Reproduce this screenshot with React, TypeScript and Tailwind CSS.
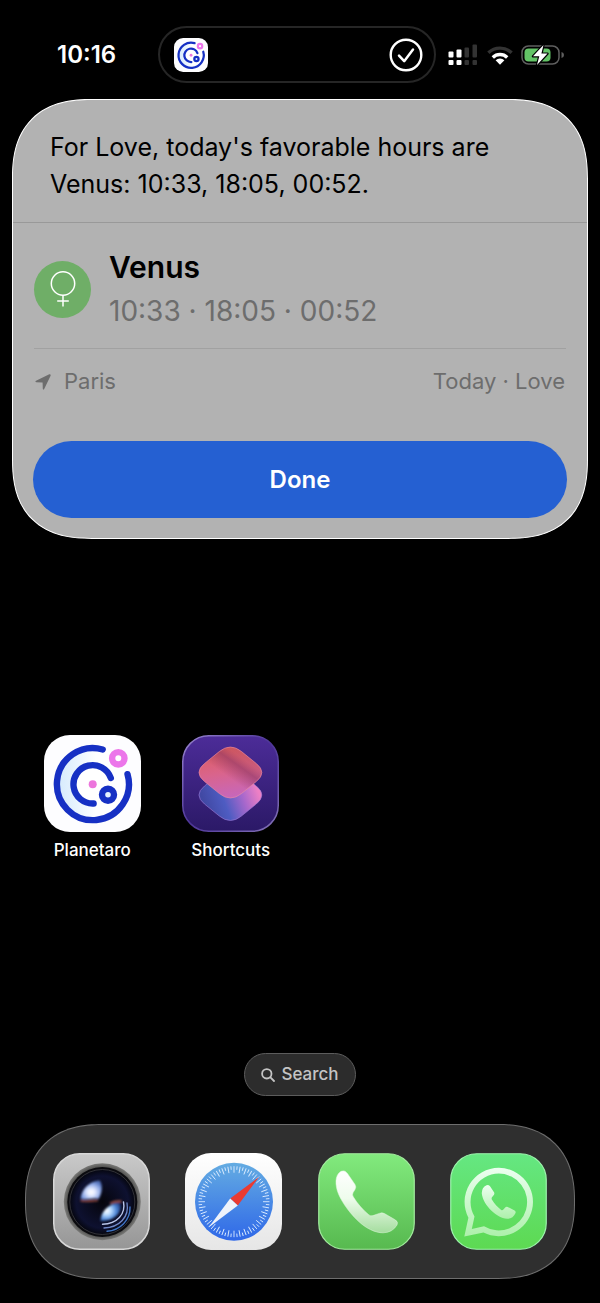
import { useState } from "react";
import type { ReactNode } from "react";
import clsx from "clsx";

const planetHours = {
  planet: "Venus",
  topic: "Love",
  city: "Paris",
  hours: ["10:33", "18:05", "00:52"],
};

const iconClass = "block size-[97px]";

function PlanetaroIcon({ className }: { className?: string }) {
  return (
    <svg viewBox="0 0 97 97" className={className} fill="none" aria-hidden="true">
      <defs>
        <linearGradient id="planetaro-glow" x1="0" y1="0" x2="1" y2="0">
          <stop offset="0" stopColor="#bfe0fb" />
          <stop offset="0.55" stopColor="#ffffff" />
        </linearGradient>
      </defs>
      <rect width="97" height="97" rx="26" fill="#fdfdff" />
      <circle cx="48.7" cy="50" r="38" fill="url(#planetaro-glow)" opacity="0.7" />
      <circle cx="48.7" cy="49.3" r="17" fill="#fff" />
      <g strokeLinecap="round" strokeWidth="6.4" stroke="#1630c4">
        <path d="M58.7 14.5A36 36 0 1 0 83.5 39.2" />
        <path d="M66.8 43A19.2 19.2 0 1 0 49.6 68.5" />
        <circle cx="64" cy="59.7" r="6" fill="#e6f2ff" />
      </g>
      <circle cx="74.3" cy="23.3" r="6.2" stroke="#ec76ea" strokeWidth="6.4" fill="#fff" />
      <circle cx="48.7" cy="49.2" r="4" fill="#ec76dc" />
    </svg>
  );
}

function ShortcutsIcon() {
  const diamond =
    "M25.9 -9Q37 0 25.9 9L11.1 21Q0 30 -11.1 21L-25.9 9Q-37 0 -25.9 -9L-11.1 -21Q0 -30 11.1 -21Z";
  return (
    <svg viewBox="0 0 97 97" className={iconClass} fill="none" aria-hidden="true">
      <defs>
        <linearGradient id="sc-bg" x1="0" y1="0" x2="0" y2="1">
          <stop offset="0" stopColor="#4c2c98" />
          <stop offset="1" stopColor="#2b1967" />
        </linearGradient>
        <linearGradient id="sc-edge" x1="0" y1="0" x2="1" y2="1">
          <stop offset="0" stopColor="#9a86cf" />
          <stop offset="0.5" stopColor="#4d3598" />
          <stop offset="1" stopColor="#8574b8" />
        </linearGradient>
        <linearGradient id="sc-top" x1="0.35" y1="0" x2="0.55" y2="1">
          <stop offset="0" stopColor="#de5e5e" />
          <stop offset="0.5" stopColor="#d9648c" />
          <stop offset="1" stopColor="#c667bd" />
        </linearGradient>
        <linearGradient id="sc-shade" x1="0.5" y1="0.62" x2="0.78" y2="0.3">
          <stop offset="0" stopColor="#8e3560" stopOpacity="0" />
          <stop offset="0.65" stopColor="#8e3560" stopOpacity="0.6" />
          <stop offset="1" stopColor="#b0485c" stopOpacity="0.35" />
        </linearGradient>
        <linearGradient id="sc-low" x1="0.1" y1="0.7" x2="0.95" y2="0.45">
          <stop offset="0" stopColor="#4149a4" />
          <stop offset="0.35" stopColor="#4e5cc2" />
          <stop offset="0.7" stopColor="#a868cc" />
          <stop offset="1" stopColor="#ee80c5" />
        </linearGradient>
      </defs>
      <rect x="0.75" y="0.75" width="95.5" height="95.5" rx="26" fill="url(#sc-bg)" stroke="url(#sc-edge)" strokeWidth="1.5" />
      <path d={diamond} transform="translate(48.4 60)" fill="url(#sc-low)" stroke="#a07ad8" strokeWidth="0.6" />
      <g transform="translate(48.4 37.5)">
        <path d={diamond} fill="url(#sc-top)" />
        <path d={diamond} fill="url(#sc-shade)" stroke="#ee8da0" strokeWidth="0.6" />
      </g>
    </svg>
  );
}

function CameraIcon() {
  return (
    <svg viewBox="0 0 97 97" className={iconClass} fill="none" aria-hidden="true">
      <defs>
        <linearGradient id="cam-bg" x1="0" y1="0" x2="0" y2="1">
          <stop offset="0" stopColor="#c9c9c9" />
          <stop offset="1" stopColor="#969696" />
        </linearGradient>
        <radialGradient id="cam-ring">
          <stop offset="0.88" stopColor="#4a4a48" />
          <stop offset="1" stopColor="#7c7c7a" />
        </radialGradient>
        <radialGradient id="cam-glass">
          <stop offset="0" stopColor="#05050c" />
          <stop offset="0.8" stopColor="#0e1130" />
          <stop offset="1" stopColor="#05060f" />
        </radialGradient>
        <radialGradient id="cam-flare" cx="0.5" cy="0.62" r="0.6">
          <stop offset="0" stopColor="#ffffff" />
          <stop offset="0.3" stopColor="#e3eaff" />
          <stop offset="0.7" stopColor="#8fa9e6" />
          <stop offset="1" stopColor="#5170b8" />
        </radialGradient>
        <radialGradient id="cam-low" cx="0.3" cy="0.45" r="0.75">
          <stop offset="0" stopColor="#ffffff" />
          <stop offset="0.3" stopColor="#b9dcff" />
          <stop offset="0.65" stopColor="#4d86d6" />
          <stop offset="1" stopColor="#1f3476" />
        </radialGradient>
        <filter id="cam-soft" x="-20%" y="-20%" width="140%" height="140%">
          <feGaussianBlur stdDeviation="1" />
        </filter>
        <filter id="cam-fine" x="-20%" y="-20%" width="140%" height="140%">
          <feGaussianBlur stdDeviation="0.5" />
        </filter>
      </defs>
      <rect x="0.75" y="0.75" width="95.5" height="95.5" rx="26" fill="url(#cam-bg)" stroke="#d8d8d8" strokeWidth="1.5" />
      <circle cx="49.3" cy="48.7" r="38.5" fill="url(#cam-ring)" />
      <circle cx="49.3" cy="49" r="35" fill="#0b0b0f" />
      <circle cx="49.3" cy="49" r="32.5" fill="url(#cam-glass)" stroke="#3c3c42" strokeWidth="0.8" />
      <g filter="url(#cam-soft)">
        <path d="M27.5 46C28 37 36 28 46.5 27.5C50 31 49.5 40 45.5 46C39 44.5 33 47.5 27.5 46Z" fill="url(#cam-flare)" />
        <path d="M27.5 47.5C33 49.5 40 47 45 47.5" stroke="#a8503f" strokeWidth="1.6" />
        <path d="M47.5 68C47.5 59 55 50.5 67 49.5C70 57 64 68 47.5 68Z" fill="url(#cam-low)" />
        <path d="M57 50.5Q63 47.5 68.5 48.5" stroke="#a8574b" strokeWidth="1.8" />
      </g>
      <g filter="url(#cam-fine)" strokeLinecap="round">
        <path d="M70.5 49C73 61 64 71 49.5 71.2" stroke="#b9c6ea" strokeWidth="1.4" />
        <path d="M74 50C76.5 64 66.5 74.5 51 75" stroke="#7189c8" strokeWidth="1.3" />
        <path d="M77 54C77.5 67 67 77.5 54 78.2" stroke="#3f74c4" strokeWidth="1.4" />
      </g>
    </svg>
  );
}

function SafariIcon() {
  const ticks = Array.from({ length: 72 }, (_, i) => i * 5);
  return (
    <svg viewBox="0 0 97 97" className={iconClass} aria-hidden="true">
      <defs>
        <linearGradient id="saf-bg" x1="0" y1="0" x2="0" y2="1">
          <stop offset="0" stopColor="#ffffff" />
          <stop offset="1" stopColor="#e6e6e6" />
        </linearGradient>
        <linearGradient id="saf-dial" x1="0" y1="0" x2="0" y2="1">
          <stop offset="0" stopColor="#64ace2" />
          <stop offset="1" stopColor="#2f68e8" />
        </linearGradient>
      </defs>
      <rect width="97" height="97" rx="26" fill="url(#saf-bg)" />
      <circle cx="49" cy="48.7" r="39" fill="url(#saf-dial)" />
      {ticks.map((deg, i) => (
        <line
          key={deg}
          x1="49"
          x2="49"
          y1="13.2"
          y2={i % 2 === 0 ? 19.7 : 16.7}
          stroke="#dcecff"
          strokeWidth="0.9"
          transform={`rotate(${deg} 49 48.7)`}
        />
      ))}
      <path d="M74.2 23.8L52.8 52.4L45.2 45.4Z" fill="#e93a32" />
      <path d="M23.6 74.4L45.2 45.4L52.8 52.4Z" fill="#eef3fb" />
    </svg>
  );
}

function PhoneIcon() {
  return (
    <svg viewBox="0 0 97 97" className={iconClass} aria-hidden="true">
      <defs>
        <linearGradient id="ph-bg" x1="0" y1="0" x2="0" y2="1">
          <stop offset="0" stopColor="#82ea7e" />
          <stop offset="1" stopColor="#57b94f" />
        </linearGradient>
        <linearGradient id="ph-set" x1="0" y1="0" x2="0" y2="1">
          <stop offset="0" stopColor="#ffffff" />
          <stop offset="0.45" stopColor="#eefcec" />
          <stop offset="1" stopColor="#a5dd9f" />
        </linearGradient>
      </defs>
      <rect x="0.75" y="0.75" width="95.5" height="95.5" rx="26" fill="url(#ph-bg)" stroke="#a2eb9e" strokeWidth="1.2" />
      <path
        d="M23 18.3Q27 16.8 29.5 20.5L37 31.5Q38.7 34 37 36.6L35 39.7Q34 41.8 35.3 43.8C39.5 51 45.5 57.4 51 62Q52.7 63.3 55 62.6L61.3 60.4Q64 59.3 66.4 60.5L77.5 67Q80.5 69 79 72Q74.5 79.6 65 79.8C57 79.8 48.5 75.4 41.5 69.2C33 61.6 24.5 50.5 20.5 41C17 32.5 16.5 22 23 18.3Z"
        fill="url(#ph-set)"
        stroke="#e1f9de"
        strokeWidth="0.5"
      />
    </svg>
  );
}

function WhatsAppIcon() {
  return (
    <svg viewBox="0 0 97 97" className={iconClass} aria-hidden="true">
      <defs>
        <linearGradient id="wa-bg" x1="0" y1="0" x2="0" y2="1">
          <stop offset="0" stopColor="#65e782" />
          <stop offset="1" stopColor="#5dd952" />
        </linearGradient>
        <linearGradient id="wa-fg" x1="0" y1="0" x2="0" y2="1">
          <stop offset="0" stopColor="#ecfff0" />
          <stop offset="1" stopColor="#adf0ab" />
        </linearGradient>
      </defs>
      <rect x="0.75" y="0.75" width="95.5" height="95.5" rx="26" fill="url(#wa-bg)" stroke="#9df3ad" strokeWidth="1.2" />
      <path
        fillRule="evenodd"
        d="M48.8 14.8A34.2 34.2 0 1 1 33.5 79.6L14.3 83.5L18.4 64.7A34.2 34.2 0 0 1 48.8 14.8ZM48.8 20.6A28.4 28.4 0 0 0 24.5 63.5L21.8 76L34 73.3A28.4 28.4 0 1 0 48.8 20.6Z"
        fill="url(#wa-fg)"
      />
      <path
        d="M36.5 32.3Q39 31.3 40.2 33.5L44 39.3Q44.8 40.7 43.8 42L42 44.3Q41.2 45.5 42 46.8C44.5 51 47.8 54.4 51.2 57Q52.4 57.6 53.4 56.6L55.2 54.4Q56.3 53.2 57.8 54L64.6 57.6Q66.2 58.6 65.4 60.3Q63 65.8 57 65.8C51.5 65.4 46 62 41.5 57.7C36 52.4 32.3 46 31.8 40.5Q31.6 34.7 36.5 32.3Z"
        fill="url(#wa-fg)"
      />
    </svg>
  );
}

function StatusIcons() {
  return (
    <div className="flex items-center gap-2" role="img" aria-label="Signal, Wi-Fi, charging">
      <svg width="31" height="22" viewBox="0 0 31 22" aria-hidden="true">
        <g fill="#fff">
          <rect x="0.5" y="7.5" width="5" height="6" rx="1" />
          <rect x="8.5" y="5.5" width="5" height="8" rx="1" />
          <rect x="0.5" y="16" width="5" height="5" rx="1" />
          <rect x="8.5" y="16" width="5" height="5" rx="1" />
        </g>
        <g fill="#333">
          <rect x="16.5" y="3.5" width="4.5" height="10" rx="1" />
          <rect x="24.5" y="0.5" width="4.5" height="13" rx="1" />
          <rect x="16.5" y="16" width="4.5" height="5" rx="1" />
          <rect x="24.5" y="16" width="4.5" height="5" rx="1" />
        </g>
      </svg>
      <svg width="26" height="22" viewBox="0 0 26 22" fill="none" strokeWidth="3.4" aria-hidden="true">
        <path d="M1.4 8.8A16.7 16.7 0 0 1 24.6 8.8" stroke="#333" />
        <path d="M5.8 13.4A10.4 10.4 0 0 1 20.2 13.4" stroke="#fff" />
        <path d="M8.6 16.3A6.3 6.3 0 0 1 17.4 16.3L13 20.8Z" fill="#fff" />
      </svg>
      <svg width="43" height="22" viewBox="0 0 43 22" fill="none" aria-hidden="true">
        <rect x="1" y="2" width="37" height="18" rx="6.5" stroke="#5f5f5f" strokeWidth="1.5" />
        <path d="M40.5 8Q43 8.6 43 11T40.5 14Z" fill="#5f5f5f" />
        <rect x="3.5" y="4.5" width="26" height="13" rx="4" fill="#63c466" />
        <path
          d="M22.5 1L12 12.3H18.3L16 21L26.5 9.6H20.4Z"
          fill="#fff"
          stroke="#000"
          strokeWidth="2.4"
          strokeLinejoin="round"
          paintOrder="stroke"
        />
      </svg>
    </div>
  );
}

function StatusBar() {
  return (
    <header className="flex items-center pt-[26px] pr-[36px] text-white">
      <time className="w-[158px] pl-[57px] text-2xl font-semibold">10:16</time>
      <div className="flex h-[57px] flex-1 items-center justify-between rounded-full border-2 border-[#262626] pr-[11px] pl-[14px]">
        <PlanetaroIcon className="size-[34px]" />
        <svg width="34" height="34" viewBox="0 0 34 34" fill="none" stroke="#fff" aria-hidden="true">
          <circle cx="17" cy="17" r="15.3" strokeWidth="2.4" />
          <path d="M10 17.6L15.2 23.2L24 11.5" strokeWidth="2.5" strokeLinecap="round" strokeLinejoin="round" />
        </svg>
      </div>
      <div className="pl-3">
        <StatusIcons />
      </div>
    </header>
  );
}

function SiriCard({ onDone }: { onDone: () => void }) {
  const { planet, topic, city, hours } = planetHours;
  return (
    <section className="mx-3 mt-4 rounded-[80px] border border-white bg-[#b2b2b2] text-black [corner-shape:superellipse(1.3)]">
      <p className="border-b border-[#999] pt-[29px] pr-[38px] pb-[19px] pl-[37px] text-[25px] leading-[37px]">
        For {topic}, today's favorable hours are {planet}: {hours.join(", ")}.
      </p>

      <div className="px-5 pt-[22px] pb-5">
        <div className="flex items-center gap-[18px] px-px pb-[15px]">
          <div className="flex size-[57px] items-center justify-center rounded-full bg-[#6fae67]">
            <svg width="26" height="36" viewBox="0 0 26 36" fill="none" stroke="#fff" strokeWidth="1.5" aria-hidden="true">
              <circle cx="13" cy="12.5" r="11.7" />
              <path d="M13 24.2V35.5M7.2 30H18.8" />
            </svg>
          </div>
          <div>
            <h2 className="text-[30px] leading-[44px] font-semibold">{planet}</h2>
            <p className="text-[28px] leading-[44px] text-[#6d6d6d]">{hours.join(" · ")}</p>
          </div>
        </div>

        <div className="mx-px flex items-center justify-between border-t border-[#a1a1a1] pt-4 pr-px text-[22px] leading-[33px] text-[#6d6d6d]">
          <span className="flex items-center gap-[13px] pl-px">
            <svg width="16" height="16" viewBox="0 0 16 16" fill="currentColor" aria-hidden="true">
              <path d="M14.3 0.3Q16 0 15.6 1.7L9.2 15Q8.2 16.3 7.8 14.7L7.6 8.6L1.2 8.2Q-0.5 7.7 1 6.8Z" />
            </svg>
            {city}
          </span>
          <span>Today · {topic}</span>
        </div>

        <button
          type="button"
          onClick={onDone}
          className="mt-[43px] h-[77px] w-full rounded-full bg-[#2560d2] text-2xl font-semibold text-white"
        >
          Done
        </button>
      </div>
    </section>
  );
}

function HomeApp({ name, children }: { name: string; children: ReactNode }) {
  return (
    <button type="button" className="flex flex-col items-center gap-1 text-[17px] leading-7 font-medium text-white">
      {children}
      {name}
    </button>
  );
}

const dockApps = [
  { name: "Camera", Icon: CameraIcon },
  { name: "Safari", Icon: SafariIcon },
  { name: "Phone", Icon: PhoneIcon },
  { name: "WhatsApp", Icon: WhatsAppIcon },
];

export default function App() {
  const [dismissed, setDismissed] = useState(false);

  return (
    <div className="flex min-h-screen flex-col bg-black pb-6 font-['Inter','Liberation_Sans',sans-serif]">
      <StatusBar />

      <div className={clsx(dismissed && "invisible")}>
        <SiriCard onDone={() => setDismissed(true)} />
      </div>

      <main className="mt-[196px] grid grid-cols-4 px-[23px]">
        <HomeApp name="Planetaro">
          <PlanetaroIcon className={iconClass} />
        </HomeApp>
        <HomeApp name="Shortcuts">
          <ShortcutsIcon />
        </HomeApp>
      </main>

      <button
        type="button"
        className="mx-auto mt-auto flex h-[43px] items-center gap-1.5 rounded-full border border-[#5c5c5c] bg-[#2c2c2c] px-4 text-[17px] font-medium text-[#c4c4c4]"
      >
        <svg width="14" height="14" viewBox="0 0 14 14" fill="none" stroke="currentColor" strokeWidth="1.8" strokeLinecap="round" aria-hidden="true">
          <circle cx="5.8" cy="5.8" r="4.7" />
          <path d="M9.4 9.4L13 13" />
        </svg>
        Search
      </button>

      <nav className="mx-[25px] mt-7 flex items-center justify-between rounded-[77px] border border-[#6e6e6e] bg-[#2f2f2f] px-[27px] py-7 [corner-shape:superellipse(1.25)]">
        {dockApps.map(({ name, Icon }) => (
          <button key={name} type="button" aria-label={name}>
            <Icon />
          </button>
        ))}
      </nav>
    </div>
  );
}
